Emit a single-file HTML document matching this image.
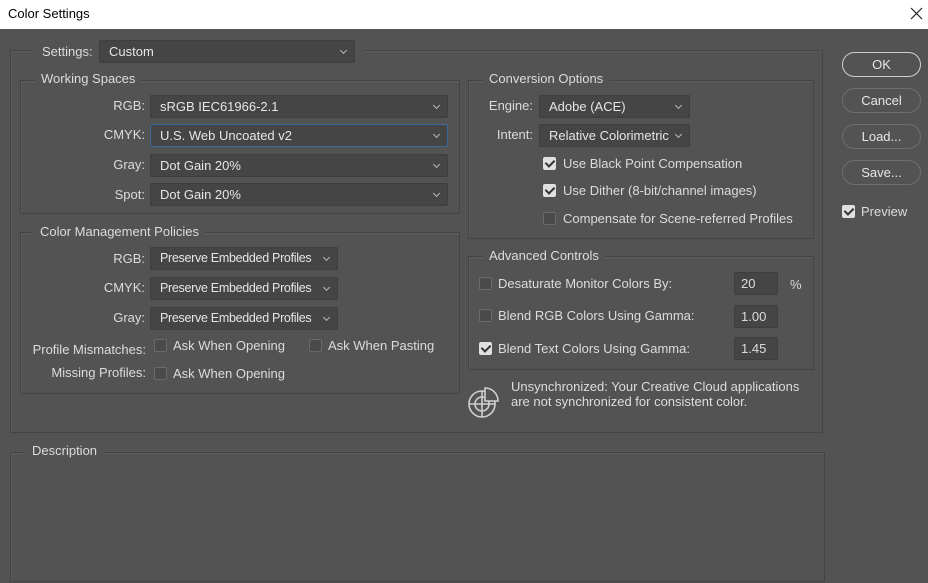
<!DOCTYPE html>
<html><head><style>
*{box-sizing:border-box;margin:0;padding:0}
body{width:928px;height:583px;background:#535353;font-family:"Liberation Sans",sans-serif;font-size:13px;color:#dcdcdc;position:relative;overflow:hidden}
.a{position:absolute;white-space:nowrap}
.title{position:absolute;left:0;top:0;width:928px;height:29px;background:#fff;color:#000;font-size:13px}
.box{position:absolute;border:1px solid #444;box-shadow:inset 1px 1px 0 #5c5c5c}
.lg{position:absolute;background:#535353;padding:0 6px;line-height:14px}
.dd{position:absolute;height:23px;background:#454545;border:1px solid #3e3e3e;border-radius:2px;padding-left:9px;line-height:21px;color:#e6e6e6;white-space:nowrap}
.dd:after{content:"";position:absolute;right:8px;top:7px;width:4px;height:4px;border-right:1px solid #bbb;border-bottom:1px solid #bbb;transform:rotate(45deg)}
.sm{font-size:12.5px;letter-spacing:-0.3px}
.lb{position:absolute;text-align:right;line-height:14px}
.cb{position:absolute;width:13px;height:13px;border:1px solid #6a6a6a;background:#4a4a4a;border-radius:2px}
.cb.on{background:#e0e0e0;border-color:#e0e0e0}
.cb.on:after{content:"";position:absolute;left:3px;top:0px;width:4px;height:7px;border-right:2px solid #333;border-bottom:2px solid #333;transform:rotate(45deg)}
.btn{position:absolute;left:842px;width:79px;height:25px;border:1px solid #6e6e6e;border-radius:13px;text-align:center;line-height:23px;color:#e6e6e6}
.in{position:absolute;left:734px;width:44px;height:23px;background:#454545;border:1px solid #3e3e3e;padding-left:6px;line-height:21px}
</style></head><body>
<div class="title"><span class="a" style="left:8px;top:6px">Color Settings</span>
<svg class="a" style="left:910px;top:7px" width="13" height="13"><path d="M1 1L12 12M12 1L1 12" stroke="#222" stroke-width="1.2"/></svg></div>

<div class="box" style="left:10px;top:50px;width:813px;height:383px"></div>
<div class="a" style="left:34px;top:42px;width:330px;height:22px;background:#535353"></div>
<div class="a" style="left:42px;top:44px">Settings:</div>
<div class="dd" style="left:99px;top:40px;width:256px">Custom</div>

<div class="box" style="left:20px;top:80px;width:440px;height:134px"></div>
<div class="lg" style="left:35px;top:72px">Working Spaces</div>
<div class="lb" style="left:60px;width:85px;top:99px">RGB:</div>
<div class="dd" style="left:150px;top:95px;width:298px">sRGB IEC61966-2.1</div>
<div class="lb" style="left:60px;width:85px;top:128px">CMYK:</div>
<div class="dd" style="left:150px;top:124px;width:298px;border-color:#3d6a98">U.S. Web Uncoated v2</div>
<div class="lb" style="left:60px;width:85px;top:158px">Gray:</div>
<div class="dd" style="left:150px;top:154px;width:298px">Dot Gain 20%</div>
<div class="lb" style="left:60px;width:85px;top:188px">Spot:</div>
<div class="dd" style="left:150px;top:183px;width:298px">Dot Gain 20%</div>

<div class="box" style="left:20px;top:232px;width:440px;height:162px"></div>
<div class="lg" style="left:34px;top:225px">Color Management Policies</div>
<div class="lb" style="left:60px;width:85px;top:252px">RGB:</div>
<div class="dd sm" style="left:150px;top:247px;width:188px">Preserve Embedded Profiles</div>
<div class="lb" style="left:60px;width:85px;top:281px">CMYK:</div>
<div class="dd sm" style="left:150px;top:277px;width:188px">Preserve Embedded Profiles</div>
<div class="lb" style="left:60px;width:85px;top:311px">Gray:</div>
<div class="dd sm" style="left:150px;top:307px;width:188px">Preserve Embedded Profiles</div>
<div class="lb" style="left:20px;width:126px;top:343px">Profile Mismatches:</div>
<div class="cb" style="left:154px;top:339px"></div><div class="a" style="left:173px;top:338px">Ask When Opening</div>
<div class="cb" style="left:309px;top:339px"></div><div class="a" style="left:328px;top:338px">Ask When Pasting</div>
<div class="lb" style="left:20px;width:126px;top:366px">Missing Profiles:</div>
<div class="cb" style="left:154px;top:367px"></div><div class="a" style="left:173px;top:366px">Ask When Opening</div>

<div class="box" style="left:468px;top:80px;width:346px;height:159px"></div>
<div class="lg" style="left:483px;top:72px">Conversion Options</div>
<div class="lb" style="left:470px;width:63px;top:99px">Engine:</div>
<div class="dd" style="left:539px;top:95px;width:151px">Adobe (ACE)</div>
<div class="lb" style="left:470px;width:63px;top:128px">Intent:</div>
<div class="dd" style="left:539px;top:124px;width:151px">Relative Colorimetric</div>
<div class="cb on" style="left:543px;top:157px"></div><div class="a" style="left:563px;top:156px">Use Black Point Compensation</div>
<div class="cb on" style="left:543px;top:184px"></div><div class="a" style="left:563px;top:183px">Use Dither (8-bit/channel images)</div>
<div class="cb" style="left:543px;top:212px"></div><div class="a" style="left:563px;top:211px">Compensate for Scene-referred Profiles</div>

<div class="box" style="left:468px;top:256px;width:346px;height:114px"></div>
<div class="lg" style="left:483px;top:249px">Advanced Controls</div>
<div class="cb" style="left:479px;top:277px"></div><div class="a" style="left:498px;top:276px">Desaturate Monitor Colors By:</div>
<div class="in" style="top:272px">20</div><div class="a" style="left:790px;top:277px">%</div>
<div class="cb" style="left:479px;top:309px"></div><div class="a" style="left:498px;top:308px">Blend RGB Colors Using Gamma:</div>
<div class="in" style="top:305px">1.00</div>
<div class="cb on" style="left:479px;top:342px"></div><div class="a" style="left:498px;top:341px">Blend Text Colors Using Gamma:</div>
<div class="in" style="top:337px">1.45</div>

<svg class="a" style="left:467px;top:385px" width="34" height="34" fill="none" stroke="#d0d0d0" stroke-width="1.6">
<circle cx="15" cy="19" r="13"/><circle cx="15" cy="19" r="7"/><path d="M15 6V32M2 19H28"/>
<path d="M18 3A13 13 0 0 1 31 16H18Z" fill="#535353"/></svg>
<div class="a" style="left:511px;top:379px;line-height:15px">Unsynchronized: Your Creative Cloud applications<br>are not synchronized for consistent color.</div>

<div class="box" style="left:10px;top:452px;width:815px;height:130px"></div>
<div class="lg" style="left:26px;top:444px">Description</div>

<div class="btn" style="top:52px;border-color:#cfcfcf">OK</div>
<div class="btn" style="top:88px">Cancel</div>
<div class="btn" style="top:124px">Load...</div>
<div class="btn" style="top:160px">Save...</div>
<div class="cb on" style="left:842px;top:205px"></div><div class="a" style="left:861px;top:204px">Preview</div>
</body></html>
